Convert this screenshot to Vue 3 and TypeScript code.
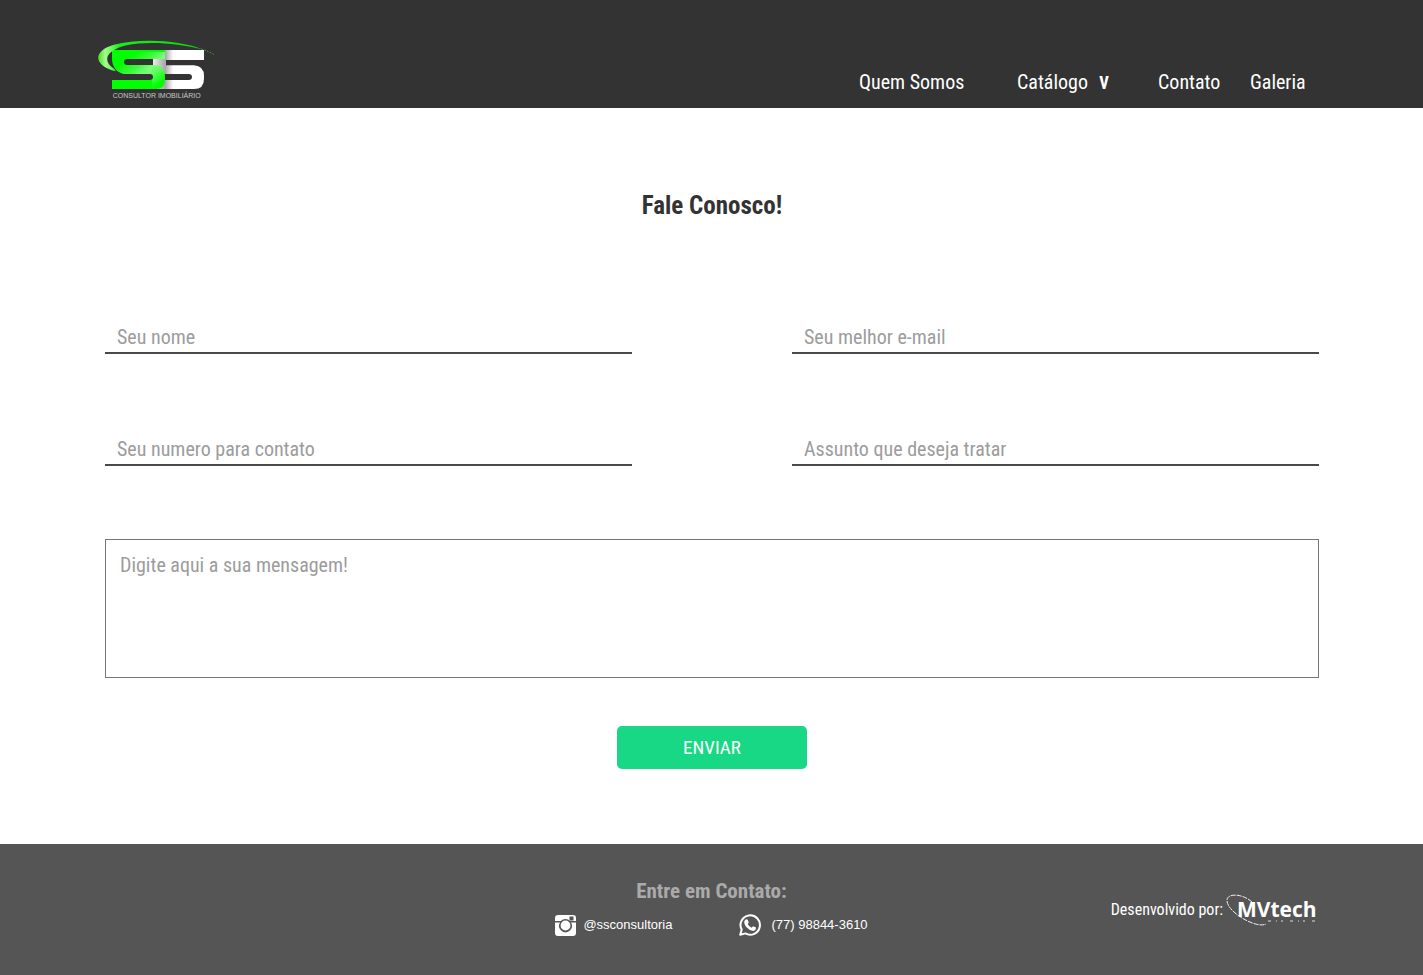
<script setup lang="ts">
import { reactive, ref } from 'vue'

interface Field {
  key: 'nome' | 'email' | 'numero' | 'assunto'
  type: string
  hint: string
}

const fields: Field[] = [
  { key: 'nome', type: 'text', hint: 'Seu nome' },
  { key: 'email', type: 'email', hint: 'Seu melhor e-mail' },
  { key: 'numero', type: 'tel', hint: 'Seu numero para contato' },
  { key: 'assunto', type: 'text', hint: 'Assunto que deseja tratar' },
]

const form = reactive({ nome: '', email: '', numero: '', assunto: '', mensagem: '' })
const catalogOpen = ref(false)
</script>

<template>
  <div class="page">
    <header class="top">
      <a class="brand" href="#" aria-label="SS Consultoria">
        <svg class="brand-mark" viewBox="24 27 360 180" aria-hidden="true">
          <defs>
            <linearGradient id="sheen" gradientUnits="userSpaceOnUse" x1="100" y1="70" x2="190" y2="185">
              <stop offset="0.15" stop-color="#00ff00" />
              <stop offset="0.4" stop-color="#40f840" />
              <stop offset="0.58" stop-color="#7dff7d" />
              <stop offset="0.72" stop-color="#5dfb5d" />
              <stop offset="0.95" stop-color="#00ff00" />
            </linearGradient>
            <linearGradient id="shade" gradientUnits="userSpaceOnUse" x1="189" y1="0" x2="250" y2="0">
              <stop offset="0" stop-color="#eeeeee" />
              <stop offset="0.6" stop-color="#a8a8a8" />
              <stop offset="1" stop-color="#ffffff" />
            </linearGradient>
            <linearGradient id="trail" x1="0" y1="0" x2="1" y2="0">
              <stop offset="0" stop-color="#48e028" />
              <stop offset="0.07" stop-color="#a4ff88" />
              <stop offset="0.2" stop-color="#18f018" />
              <stop offset="1" stop-color="#0ad80a" />
            </linearGradient>
          </defs>
          <path fill="url(#shade)" d="M189 60H342V90H228V106H312Q342 108 342 138V146Q342 177 312 177H200V150H296Q306 150 306 141Q306 132 296 132H216L189 106Z" />
          <path fill="#00ff00" d="M225 60H66V84H225Z" />
          <path fill="url(#sheen)" d="M225 66H66V84Q66 122 100 132H180Q189 132 189 141Q189 150 180 150H66V177H198Q225 177 225 150V137Q225 108 197 105H112Q102 105 102 96Q102 87 112 87H225Z" />
          <path fill="#00ff00" d="M66 150H186V177H66Z" />
          <path fill="url(#trail)" d="M78 124C8 106 8 62 72 44C150 24 270 30 336 58C270 40 170 32 110 46C44 62 38 94 72 116Z" />
          <path fill="none" stroke="#35cc35" stroke-width="3" stroke-dasharray="4 5" d="M334 57Q360 65 372 74" />
          <text class="brand-caption" x="68" y="204">CONSULTOR IMOBILIÁRIO</text>
        </svg>
      </a>
      <nav class="menu" aria-label="Principal">
        <a href="#quem-somos">Quem Somos</a>
        <a href="#catalogo">Catálogo</a>
        <button
          class="toggle"
          type="button"
          aria-label="Abrir catálogo"
          :aria-expanded="catalogOpen"
          @click="catalogOpen = !catalogOpen"
        >v</button>
        <a href="#contato">Contato</a>
        <a href="#galeria">Galeria</a>
      </nav>
    </header>

    <main class="content">
      <h1>Fale Conosco!</h1>
      <form class="form" @submit.prevent>
        <div class="fields">
          <input
            v-for="f in fields"
            :key="f.key"
            v-model="form[f.key]"
            :type="f.type"
            :name="f.key"
            :placeholder="f.hint"
            :aria-label="f.hint"
          />
        </div>
        <textarea
          v-model="form.mensagem"
          name="mensagem"
          placeholder="Digite aqui a sua mensagem!"
          aria-label="Digite aqui a sua mensagem!"
        ></textarea>
        <button class="send" type="submit">ENVIAR</button>
      </form>
    </main>

    <footer class="bottom">
      <section class="contact">
        <h2>Entre em Contato:</h2>
        <div class="channels">
          <a class="channel insta" href="#instagram">
            <svg viewBox="0 0 21 21" width="21" height="21" aria-hidden="true">
              <path fill="#fff" d="M3 0H18Q21 0 21 3V6H15.2A6.4 6.4 0 0 0 5.800 6H0V3Q0 0 3 0Z" />
              <path fill="#fff" d="M0 7.500H5A6.400 6.400 0 1 0 16 7.500H21V18Q21 21 18 21H3Q0 21 0 18Z" />
              <circle cx="10.500" cy="10.500" r="4.900" fill="#fff" />
              <rect x="14.500" y="1.500" width="4" height="4" fill="#555" />
            </svg>
            <span>@ssconsultoria</span>
          </a>
          <a class="channel whats" href="#whatsapp">
            <svg viewBox="0 0 22 22" width="22" height="22" aria-hidden="true">
              <path fill="none" stroke="#fff" stroke-width="2" stroke-linejoin="round" d="M1.200 20.800L2.700 15.600A9.700 9.700 0 1 1 6.400 19.400Z" />
              <path fill="#fff" d="M7.200 5.300L8.500 5.500L9.800 8.500L8.700 10Q10 12.600 12.700 13.700L14 12.200L17 13.600Q17.100 16.400 14.300 16.900Q11 17 7.800 13.500Q4.800 10.200 5.300 7.500Q5.800 5.800 7.200 5.300Z" />
            </svg>
            <span>(77) 98844-3610</span>
          </a>
        </div>
      </section>
      <p class="credit">
        <span>Desenvolvido por:</span>
        <svg class="credit-mark" viewBox="0 0 93 34" width="93" height="34" role="img" aria-label="MVtech">
          <path fill="none" stroke="#eee" stroke-width="1" stroke-dasharray="5 1" d="M26 9C16 0 0 0 1 8C2 20 31 36 40 31" />
          <text class="credit-name" x="11" y="24">MVtech</text>
          <path fill="none" stroke="#ddd" stroke-width="1" stroke-dasharray="3 5 1 4 2 7" d="M42 28H91" />
        </svg>
      </p>
    </footer>
  </div>
</template>

<style>
body {
  margin: 0;
  background: #fff;
}
</style>

<style scoped>
.page {
  --narrow: "Agency FB", "Roboto Condensed", "Noto Sans CJK SC", sans-serif;
  display: flex;
  flex-direction: column;
  min-height: 100vh;
  font-family: var(--narrow);
}
.page *,
.page {
  box-sizing: border-box;
}
a {
  color: inherit;
  text-decoration: none;
}
.top {
  display: flex;
  justify-content: space-between;
  align-items: flex-start;
  padding: 39px 117px 9px 98px;
  background: #333;
  color: #fff;
}
.brand-mark {
  display: block;
  width: 120px;
  height: 60px;
}
.brand-caption {
  fill: #c8c8c8;
  font-family: "Liberation Sans", sans-serif;
  font-size: 21px;
}
.menu {
  display: grid;
  grid-template-columns: 158px 82px 59px 92px 56px;
  margin-top: 28px;
  font-size: 20px;
  line-height: 30px;
  white-space: nowrap;
}
.toggle {
  justify-self: start;
  padding: 0;
  border: 0;
  background: none;
  color: inherit;
  font: 500 23px/30px var(--narrow);
  cursor: pointer;
}
.content {
  flex: 1;
  padding: 80px 104px 75px 105px;
}
h1 {
  margin: 0;
  color: #333;
  font-size: 25px;
  line-height: 36px;
  text-align: center;
}
.form {
  display: flex;
  flex-direction: column;
}
.fields {
  display: grid;
  grid-template-columns: 1fr 1fr;
  gap: 76px 160px;
  margin-top: 94px;
}
input {
  width: 100%;
  height: 36px;
  padding: 4px 12px 0;
  border: 0;
  border-bottom: 2px solid #4a4848;
  background: transparent;
  color: #333;
  font: 20px/30px var(--narrow);
}
textarea {
  display: block;
  width: 100%;
  height: 139px;
  margin-top: 73px;
  padding: 10px 14px;
  border: 1px solid #767676;
  background: transparent;
  color: #333;
  font: 20px/30px var(--narrow);
  resize: none;
}
input::placeholder,
textarea::placeholder {
  color: #9c9c9c;
  opacity: 1;
}
.send {
  align-self: center;
  width: 190px;
  height: 43px;
  margin-top: 48px;
  padding: 0;
  border: 0;
  border-radius: 5px;
  background: #18d886;
  color: #fff;
  font: 19px/30px var(--narrow);
  cursor: pointer;
}
.bottom {
  display: grid;
  grid-template-columns: 1fr auto 1fr;
  align-items: start;
  padding: 32px 104px 39px;
  background: #555;
  color: #fff;
}
.contact {
  grid-column: 2;
}
h2 {
  margin: 0;
  color: #aaa;
  font-size: 21px;
  line-height: 30px;
  text-align: center;
}
.channels {
  display: flex;
  gap: 67px;
  margin-top: 8px;
}
.channel {
  display: flex;
  align-items: center;
  height: 22px;
  font: 13px/22px "Liberation Sans", Arial, sans-serif;
}
.insta {
  gap: 7px;
}
.whats {
  gap: 10px;
}
.credit {
  display: flex;
  justify-self: end;
  align-items: center;
  gap: 3px;
  margin: 17px 0 0;
  font-size: 16px;
  line-height: 30px;
  white-space: nowrap;
}
.credit-name {
  fill: #fff;
  font-family: "Open Sans", "Noto Sans", sans-serif;
  font-size: 21px;
  font-weight: 700;
}
</style>
